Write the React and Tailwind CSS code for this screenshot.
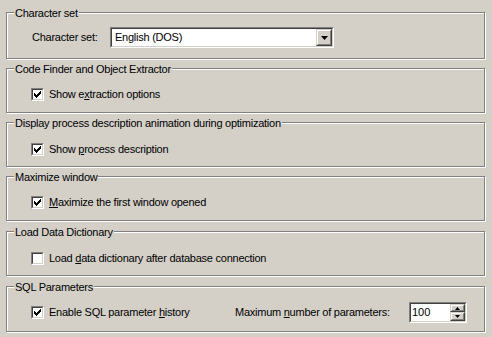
const face = "#d4d0c8";

function Group({ label, className, children }) {
    return (
        <div className={`relative w-[479px] border border-[#808080] shadow-[inset_1px_1px_0_#fff,1px_1px_0_#fff] ${className}`}>
            <span className="absolute left-[7px] top-[-6px] bg-[#d4d0c8] px-[1px] leading-[13px] whitespace-nowrap">{label}</span>
            {children}
        </div>
    );
}

function Sunken({ className, children }) {
    return (
        <div className={`border border-t-[#808080] border-l-[#808080] border-r-white border-b-white ${className}`}>
            <div className="flex h-full w-full border border-t-[#404040] border-l-[#404040] border-r-[#d4d0c8] border-b-[#d4d0c8] bg-white">
                {children}
            </div>
        </div>
    );
}

function Raised({ className, children }) {
    return (
        <div className={`border border-t-[#d4d0c8] border-l-[#d4d0c8] border-r-[#404040] border-b-[#404040] ${className}`}>
            <div className="flex h-full w-full items-center justify-center border border-t-white border-l-white border-r-[#808080] border-b-[#808080] bg-[#d4d0c8]">
                {children}
            </div>
        </div>
    );
}

function CheckBox({ checked }) {
    const tops = [2, 3, 4, 3, 2, 1, 0];
    return (
        <div className="relative h-[13px] w-[13px] shrink-0">
            <Sunken className="h-[13px] w-[13px]" />
            {checked && (
                <svg className="absolute left-0 top-0" width="13" height="13" shapeRendering="crispEdges">
                    {tops.map((t, i) => (
                        <rect key={i} x={3 + i} y={3 + t} width="1" height="3" fill="#000" />
                    ))}
                </svg>
            )}
        </div>
    );
}

function CheckRow({ checked, children, className = "" }) {
    return (
        <div className={`flex items-center ${className}`}>
            <CheckBox checked={checked} />
            <span className="ml-[5px] whitespace-nowrap leading-[13px]">{children}</span>
        </div>
    );
}

function Arrow({ up, w = 7, h = 4 }) {
    const pts = up ? `0,${h} ${w},${h} ${w / 2},0` : `0,0 ${w},0 ${w / 2},${h}`;
    return (
        <svg width={w} height={h}>
            <polygon points={pts} fill="#000" />
        </svg>
    );
}

export default function App() {
    return (
        <div
            className="h-[337px] w-[492px] overflow-hidden bg-[#d4d0c8] pl-[6px] pt-[12px] text-[11px] tracking-[-0.25px] text-black"
            style={{ fontFamily: '"Liberation Sans", Arial, sans-serif' }}
        >
            <Group label="Character set" className="h-[47px]">
                <div className="flex items-center pl-[25px] pt-[14px]">
                    <span className="w-[78px] leading-[13px]">Character set:</span>
                    <Sunken className="h-[21px] w-[224px]">
                        <span className="flex-1 pl-[3px] leading-[17px]">English (DOS)</span>
                        <Raised className="h-[17px] w-[16px]">
                            <Arrow />
                        </Raised>
                    </Sunken>
                </div>
            </Group>

            <Group label="Code Finder and Object Extractor" className="mt-[9px] h-[45px]">
                <CheckRow checked className="pl-[24px] pt-[19px]">
                    Show e<u>x</u>traction options
                </CheckRow>
            </Group>

            <Group label="Display process description animation during optimization" className="mt-[9px] h-[45px]">
                <CheckRow checked className="pl-[24px] pt-[20px]">
                    Show <u>p</u>rocess description
                </CheckRow>
            </Group>

            <Group label="Maximize window" className="mt-[9px] h-[45px]">
                <CheckRow checked className="pl-[24px] pt-[19px]">
                    <u>M</u>aximize the first window opened
                </CheckRow>
            </Group>

            <Group label="Load Data Dictionary" className="mt-[10px] h-[45px]">
                <CheckRow className="pl-[24px] pt-[20px]">
                    Load <u>d</u>ata dictionary after database connection
                </CheckRow>
            </Group>

            <Group label="SQL Parameters" className="mt-[10px] h-[46px]">
                <div className="flex items-center pl-[24px] pt-[15px]">
                    <CheckRow checked className="w-[204px]">
                        Enable SQL parameter <u>h</u>istory
                    </CheckRow>
                    <span className="w-[174px] whitespace-nowrap leading-[13px]">
                        Maximum <u>n</u>umber of parameters:
                    </span>
                    <Sunken className="h-[21px] w-[58px]">
                        <span className="flex-1 pl-[1px] leading-[17px] tracking-normal">100</span>
                        <div className="flex flex-col">
                            <Raised className="h-[8px] w-[15px]">
                                <Arrow up w={5} h={3} />
                            </Raised>
                            <Raised className="h-[9px] w-[15px]">
                                <Arrow w={5} h={3} />
                            </Raised>
                        </div>
                    </Sunken>
                </div>
            </Group>
        </div>
    );
}
